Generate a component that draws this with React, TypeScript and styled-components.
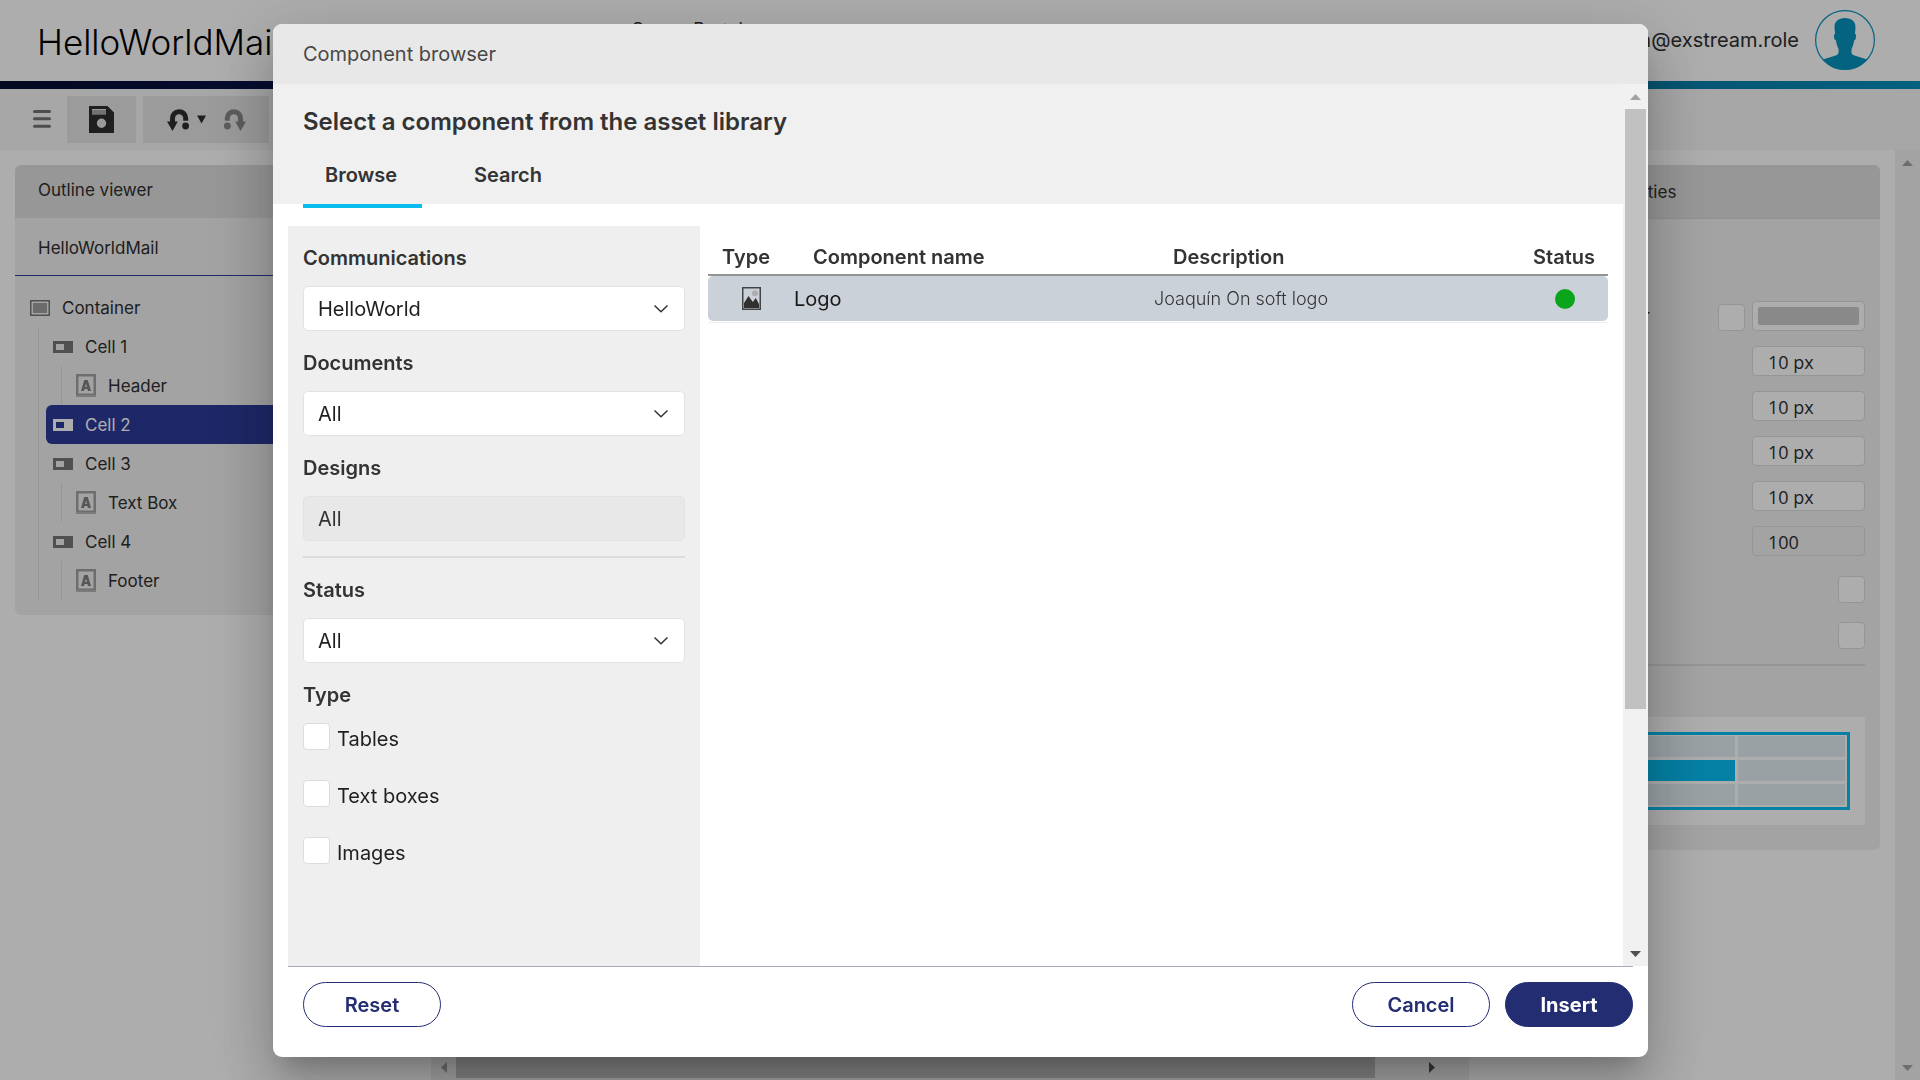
import React from "react";
import styled, { createGlobalStyle, css } from "styled-components";

const GlobalStyle = createGlobalStyle`
  *, *::before, *::after { box-sizing: border-box; }
  html, body, #root { height: 100%; }
  body {
    margin: 0;
    overflow: hidden;
    background: #fff;
    color: #2e2e2e;
    font-family: Inter, "Liberation Sans", sans-serif;
    font-size: 17px;
    line-height: 24px;
  }
  button, input, select { font: inherit; color: inherit; margin: 0; }
  ul { list-style: none; margin: 0; padding: 0; }
  h1, h2, h3 { margin: 0; }
`;

/* ---------- Page behind the dialog ---------- */

const Page = styled.div`
  height: 100vh;
  display: flex;
  flex-direction: column;
`;

const Header = styled.header`
  height: 81px;
  flex: none;
  padding: 0 45px 1px 37px;
  display: flex;
  align-items: center;
  justify-content: space-between;
`;

const AppTitle = styled.h1`
  flex: none;
  width: 595px;
  padding-top: 4px;
  font-size: 35px;
  line-height: 44px;
  font-weight: 300;
  color: #000;
`;

const Tagline = styled.p`
  flex: 1;
  align-self: flex-start;
  margin: 18px 0 0;
  font-size: 18px;
`;

const User = styled.div`
  display: flex;
  align-items: center;
  gap: 16px;
  font-size: 20px;
`;

const BrandStripe = styled.div`
  height: 8px;
  flex: none;
  background: linear-gradient(90deg, #060c30 0%, #0c1650 20%, #0a6b98 75%, #0790bb 100%);
`;

const Toolbar = styled.nav`
  height: 61px;
  flex: none;
  padding: 7px 24px;
  display: flex;
  align-items: flex-start;
  background: #f7f7f7;
`;

const MenuButton = styled.button`
  width: 36px;
  height: 47px;
  margin-right: 7px;
  padding: 0 0 2px;
  border: 0;
  background: none;
  display: grid;
  place-items: center;
`;

const ToolGroup = styled.div<{ $padded?: boolean }>`
  height: 47px;
  margin-right: 7px;
  padding: ${(p) => (p.$padded ? "0 6px 0 15px" : "0")};
  display: flex;
  align-items: center;
  background: #e5e5e5;
`;

const ToolButton = styled.button<{ $width: number }>`
  width: ${(p) => p.$width}px;
  height: 47px;
  padding: 0;
  border: 0;
  background: none;
  display: grid;
  place-items: center;
`;

const Workspace = styled.main`
  flex: 1;
  min-height: 0;
  display: flex;
`;

const SideColumn = styled.section<{ $width: number }>`
  width: ${(p) => p.$width}px;
  flex: none;
  padding: 15px;
`;

const Panel = styled.div`
  border-radius: 6px;
  overflow: hidden;
  background: #f0f0f0;
`;

const PanelHeader = styled.h2<{ $ruled?: boolean }>`
  height: ${(p) => (p.$ruled ? 54 : 53)}px;
  padding: ${(p) => (p.$ruled ? "1px 27px 0" : "0 23px 3px")};
  border-bottom: ${(p) => (p.$ruled ? "1px solid #d6d6d6" : "0")};
  display: flex;
  align-items: center;
  background: #dfdfdf;
  font-size: 17px;
  font-weight: 400;
`;

const DocumentName = styled.div`
  height: 58px;
  padding: 2px 23px 0;
  display: flex;
  align-items: center;
  border-bottom: 1px solid #343c9d;
`;

const Tree = styled.ul`
  padding: 12px 0 15px 8px;
`;

const Branch = styled.ul`
  margin-left: 15px;
  padding-left: 7px;
  border-left: 1px solid #dedede;
`;

const TreeRow = styled.div<{ $selected?: boolean }>`
  height: 39px;
  padding-left: 7px;
  display: flex;
  align-items: center;
  gap: 12px;
  ${(p) =>
    p.$selected &&
    css`
      border-radius: 6px;
      background: #2d3a98;
      color: #fff;
    `}
`;

const Canvas = styled.section`
  flex: 1;
  display: flex;
`;

const CanvasView = styled.div`
  flex: 1;
  display: flex;
  flex-direction: column;
  justify-content: flex-end;
`;

const Track = styled.div<{ $horizontal?: boolean }>`
  ${(p) => (p.$horizontal ? "height: 25px; padding: 2px 0;" : "width: 25px; padding: 0 2px;")}
  flex: none;
  display: flex;
  flex-direction: ${(p) => (p.$horizontal ? "row" : "column")};
  background: #f1f1f1;
`;

const TrackEnd = styled.div<{ $horizontal?: boolean }>`
  ${(p) => (p.$horizontal ? "width: 25px;" : "height: 25px;")}
  flex: none;
  display: grid;
  place-items: center;
`;

const Thumb = styled.div<{ $grow: number }>`
  flex: ${(p) => p.$grow};
  background: #c1c1c1;
`;

const TrackRest = styled.div<{ $grow: number }>`
  flex: ${(p) => p.$grow};
`;

const Properties = styled.div`
  padding: 82px 15px 25px;
`;

const PropertyList = styled.div<{ $ticks?: boolean }>`
  padding: ${(p) => (p.$ticks ? "20px 0 15px" : "0")};
  display: flex;
  flex-direction: column;
  gap: ${(p) => (p.$ticks ? 19 : 15)}px;
`;

const PropertyRow = styled.div`
  padding-left: 9px;
  display: flex;
  align-items: center;
  justify-content: space-between;
`;

const PropertySection = styled.h3`
  height: 51px;
  padding-left: 9px;
  display: flex;
  align-items: center;
  font-size: 17px;
  font-weight: 600;
`;

const Controls = styled.div`
  display: flex;
  align-items: flex-end;
  gap: 7px;
`;

const ValueInput = styled.input`
  width: 113px;
  height: 30px;
  padding: 2px 15px 0;
  border: 1px solid #dcdcdc;
  border-radius: 4px;
  background: #fff;
  font-family: "Open Sans", "Noto Sans", sans-serif;
  font-size: 18px;
  &:disabled { background: #f0f0f0; }
`;

const ColorButton = styled.button`
  width: 113px;
  height: 30px;
  padding: 5px;
  border: 1px solid #dcdcdc;
  border-radius: 4px;
  background: #fff;
  display: flex;
  &::before {
    content: "";
    flex: 1;
    height: 18px;
    border-radius: 2px;
    background: #cacaca;
  }
`;

const Tick = styled.input.attrs({ type: "checkbox" })`
  appearance: none;
  width: 27px;
  height: 27px;
  border: 1px solid #dcdcdc;
  border-radius: 4px;
  background: #fff;
`;

const Rule = styled.hr`
  width: 100%;
  height: 2px;
  margin: 0;
  border: 0;
  background: #dcdcdc;
`;

const GridPreview = styled.div`
  height: 108px;
  padding: 15px;
  display: grid;
  background: #fff;
`;

const GridFrame = styled.div`
  padding: 1px 2px 2px;
  border: 3px solid #07bef3;
  display: grid;
  grid-template-columns: repeat(3, 1fr);
  gap: 3px;
`;

const GridCell = styled.div<{ $active: boolean }>`
  background: ${(p) => (p.$active ? "#07bef3" : "#e3eef4")};
`;

/* ---------- Dialog ---------- */

const Backdrop = styled.div`
  position: fixed;
  inset: 0;
  padding: 24px 272px 23px 273px;
  display: flex;
  background: rgba(0, 0, 0, 0.32);
`;

const Dialog = styled.div`
  flex: 1;
  min-width: 0;
  display: flex;
  flex-direction: column;
  overflow: hidden;
  border-radius: 9px;
  background: #fff;
  color: #333;
  font-size: 20px;
  box-shadow:
    0 17px 23px -11px rgba(0, 0, 0, 0.2),
    0 36px 57px 5px rgba(0, 0, 0, 0.14),
    0 14px 69px 12px rgba(0, 0, 0, 0.12);
`;

const DialogTitle = styled.div`
  height: 60px;
  flex: none;
  padding: 0 30px;
  display: flex;
  align-items: center;
  background: #e8e8e8;
  color: #484848;
`;

const DialogBody = styled.div`
  flex: 1;
  min-height: 0;
  display: flex;
`;

const DialogContent = styled.div`
  flex: 1;
  display: flex;
  flex-direction: column;
`;

const Intro = styled.div`
  height: 120px;
  flex: none;
  padding: 0 30px;
  background: #f0f0f0;
`;

const Heading = styled.h2`
  height: 52px;
  padding-top: 23px;
  font-size: 24px;
  line-height: 30px;
  font-weight: 600;
`;

const Tabs = styled.div`
  height: 72px;
  display: flex;
  gap: 30px;
`;

const Tab = styled.button<{ $active?: boolean }>`
  min-width: 119px;
  height: 72px;
  padding: 10px 22px 0;
  border: 0;
  border-bottom: 4px solid ${(p) => (p.$active ? "#09bcef" : "transparent")};
  background: none;
  font-weight: 600;
  text-align: left;
`;

const Columns = styled.div`
  flex: 1;
  padding: 22px 15px 0;
  display: flex;
  gap: 8px;
`;

const Filters = styled.form`
  width: 412px;
  flex: none;
  padding: 15px;
  display: flex;
  flex-direction: column;
  gap: 15px;
  background: #efefef;
`;

const Field = styled.div`
  display: flex;
  flex-direction: column;
  gap: 15px;
`;

const fieldLabel = css`
  height: 30px;
  padding: 2px 0 0;
  line-height: 30px;
  font-weight: 600;
`;

const Label = styled.label`
  ${fieldLabel}
`;

const SelectBox = styled.div`
  display: grid;
  align-items: center;
  svg {
    grid-area: 1 / 1;
    justify-self: end;
    margin-right: 16px;
    pointer-events: none;
  }
`;

const Select = styled.select`
  grid-area: 1 / 1;
  appearance: none;
  width: 100%;
  height: 45px;
  padding: 0 14px;
  border: 1px solid #e2e2e2;
  border-radius: 5px;
  background: #fff;
  color: #1f1f1f;
  &:disabled {
    background: #e8e8e8;
    color: #333;
    opacity: 1;
  }
`;

const TypeGroup = styled.fieldset`
  margin: 0;
  padding: 0;
  border: 0;
  min-width: 0;
`;

const Legend = styled.legend`
  ${fieldLabel}
  margin-bottom: 15px;
`;

const Options = styled.div`
  display: flex;
  flex-direction: column;
  gap: 30px;
`;

const Option = styled.label`
  height: 27px;
  display: flex;
  align-items: center;
  gap: 7px;
  color: #1f1f1f;
  span { padding-top: 4px; }
`;

const Results = styled.div`
  flex: 1;
  min-width: 0;
`;

const Table = styled.table`
  width: 100%;
  table-layout: fixed;
  border-collapse: separate;
  border-spacing: 0;
  padding-bottom: 1px;
  border-bottom: 1px solid #eee;
`;

const Th = styled.th<{ $width?: string; $left?: number }>`
  width: ${(p) => p.$width ?? "auto"};
  height: 50px;
  padding: 14px 0 0 ${(p) => p.$left ?? 24}px;
  border-bottom: 2px solid #949494;
  text-align: left;
  font-weight: 600;
  white-space: nowrap;
`;

const Td = styled.td<{ $left?: number; $small?: boolean }>`
  height: 45px;
  padding: 0 0 0 ${(p) => p.$left ?? 5}px;
  background: #cbd1d8;
  color: ${(p) => (p.$small ? "#333" : "#1a1a1a")};
  font-size: ${(p) => (p.$small ? 18 : 20)}px;
  font-weight: ${(p) => (p.$small ? 300 : 400)};
  &:first-child { border-radius: 5px 0 0 5px; }
  &:last-child { border-radius: 0 5px 5px 0; }
  svg { display: block; }
`;

const StatusDot = styled.div`
  width: 20px;
  height: 20px;
  border-radius: 50%;
  background: #0aa51b;
`;

const DialogFooter = styled.footer`
  height: 91px;
  flex: none;
  margin: 0 15px;
  padding: 15px 0 30px 15px;
  display: flex;
  gap: 15px;
  border-top: 1px solid #a9abbb;
`;

const Spacer = styled.div`
  flex: 1;
`;

const PillButton = styled.button<{ $primary?: boolean }>`
  width: ${(p) => (p.$primary ? 128 : 138)}px;
  height: 45px;
  padding: 0;
  border: 1px solid #222d72;
  border-radius: 23px;
  background: ${(p) => (p.$primary ? "#222d72" : "#fff")};
  color: ${(p) => (p.$primary ? "#fff" : "#222d72")};
  font-weight: ${(p) => (p.$primary ? 700 : 600)};
`;

/* ---------- Icons ---------- */

const Avatar = () => (
  <svg width="60" height="60" viewBox="0 0 60 60" fill="#0593bd" aria-hidden="true">
    <circle cx="30" cy="30" r="29.4" fill="none" stroke="#0593bd" strokeWidth="1.2" />
    <path d="M30 8c6.500 0 10.700 3.500 10.500 9.500L40 24c1.600.2 1.300 2.600.6 5-.4 1.200-1 1.300-1.500 1.500-.4 3.500-1.500 6.500-2.500 8.500-.5 3.500 0 5.500 2.200 6.300 4 1.600 8 2.300 13.500 4.200C46 56.500 38.500 60 30 60S13.500 56.500 8 49.500c5.500-1.900 9.500-2.600 13.300-4.200 2.200-.8 2.700-2.800 2.200-6.300-1-2-2.100-5-2.500-8.500-.5-.2-1.100-.3-1.500-1.500-.7-2.400-1-4.800.6-5l-.6-6.500C19.300 11.500 23.500 8 30 8z" />
  </svg>
);

const MenuIcon = () => (
  <svg width="18" height="18" viewBox="0 0 18 18" stroke="#737373" strokeWidth="3" strokeLinecap="round" aria-hidden="true">
    <path d="M1.500 1.500h15M1.500 8.800h15M1.500 16.300h15" />
  </svg>
);

const SaveIcon = () => (
  <svg width="25" height="27" viewBox="0 0 25 27" aria-hidden="true">
    <path fillRule="evenodd" fill="#2e2e2e" d="M0 0h18.500L25 6.500V27H0zM3 3v5.500h14V3zM12.500 12.500a4.700 4.700 0 1 0 0 9.400 4.700 4.700 0 0 0 0-9.400z" />
    <path fill="#a8a8a8" d="M3 4h14v4H3z" />
  </svg>
);

const UndoIcon = ({ color, flip }: { color: string; flip?: boolean }) => (
  <svg width="22" height="22" viewBox="0 0 22 22" aria-hidden="true">
    <g transform={flip ? "matrix(-1 0 0 1 22 0)" : undefined}>
      <path d="M5.500 13V9.500a6.600 6.600 0 0 1 13.200-.5v2.800" fill="none" stroke={color} strokeWidth="5" />
      <path d="M0 12.500h10.800L5.500 22z" fill={color} />
      <circle cx="18.600" cy="17" r="3.400" fill={color} />
    </g>
  </svg>
);

const arrowPaths = {
  up: "M5.500 0L11 6H0z",
  down: "M0 0h11L5.500 6z",
  left: "M6 0v11L0 5.500z",
  right: "M0 0l6 5.500L0 11z",
};

const Arrow = ({ dir, color }: { dir: keyof typeof arrowPaths; color: string }) => {
  const upright = dir === "up" || dir === "down";
  return (
    <svg width={upright ? 11 : 6} height={upright ? 6 : 11} aria-hidden="true">
      <path d={arrowPaths[dir]} fill={color} />
    </svg>
  );
};

const CaretIcon = () => (
  <svg width="9" height="9" viewBox="0 0 9 9" aria-hidden="true">
    <path d="M0 0.500h9L4.500 8.500z" fill="#2e2e2e" />
  </svg>
);

const ContainerIcon = () => (
  <svg width="20" height="16" viewBox="0 0 20 16" aria-hidden="true">
    <rect x="0.750" y="0.750" width="18.500" height="14.500" fill="none" stroke="#777" strokeWidth="1.500" />
    <rect x="3" y="3" width="14" height="10" fill="#a0a0a0" />
  </svg>
);

const CellIcon = () => (
  <svg width="20" height="12" viewBox="0 0 20 12" aria-hidden="true">
    <path fillRule="evenodd" fill="currentColor" d="M0 0h20v12H0zM3 3v6h8V3z" />
  </svg>
);

const TextIcon = () => (
  <svg width="20" height="23" viewBox="0 0 20 23" aria-hidden="true">
    <rect x="1.250" y="1.250" width="17.500" height="19.500" fill="none" stroke="#a3a3a3" strokeWidth="2.500" />
    <path d="M0 22h20" stroke="#b5b5b5" strokeWidth="2" />
    <path fillRule="evenodd" fill="#808080" d="M8.200 6h3.600L15 17h-3l-.6-2H8.600L8 17H5zM10 9.200L9.100 13h1.800z" />
  </svg>
);

const ChevronIcon = () => (
  <svg width="16" height="10" viewBox="0 0 16 10" fill="none" stroke="#333" strokeWidth="1.500" aria-hidden="true">
    <path d="M1.500 1.500L8 7.800l6.500-6.300" />
  </svg>
);

const ImageIcon = () => (
  <svg width="19" height="23" viewBox="0 0 19 23" role="img" aria-label="Image">
    <rect x="0.750" y="0.750" width="17.500" height="21.500" fill="none" stroke="#444" strokeWidth="1.500" />
    <circle cx="13" cy="6.200" r="3" fill="#adadad" />
    <path d="M2 21v-5l4.500-7 4.300 6 3-4 3.200 6v4z" fill="#303030" />
  </svg>
);

/* ---------- Parts ---------- */

const CellMark = styled.span<{ $selected?: boolean }>`
  display: flex;
  color: ${(p) => (p.$selected ? "#fff" : "#777")};
`;

type CellNode = { name: string; child?: string; selected?: boolean };

const cells: CellNode[] = [
  { name: "Cell 1", child: "Header" },
  { name: "Cell 2", selected: true },
  { name: "Cell 3", child: "Text Box" },
  { name: "Cell 4", child: "Footer" },
];

const Outline = () => (
  <Panel>
    <PanelHeader>Outline viewer</PanelHeader>
    <DocumentName>HelloWorldMail</DocumentName>
    <Tree>
      <li>
        <TreeRow>
          <ContainerIcon />
          Container
        </TreeRow>
        <Branch>
          {cells.map((cell) => (
            <li key={cell.name}>
              <TreeRow $selected={cell.selected}>
                <CellMark $selected={cell.selected}>
                  <CellIcon />
                </CellMark>
                {cell.name}
              </TreeRow>
              {cell.child && (
                <Branch>
                  <li>
                    <TreeRow>
                      <TextIcon />
                      {cell.child}
                    </TreeRow>
                  </li>
                </Branch>
              )}
            </li>
          ))}
        </Branch>
      </li>
    </Tree>
  </Panel>
);

const paddings = ["Top padding", "Right padding", "Bottom padding", "Left padding"];

const CellProperties = () => (
  <Panel>
    <PanelHeader $ruled>Container properties</PanelHeader>
    <Properties>
      <PropertyList>
        <PropertyRow>
          <label htmlFor="bg-on">Background color</label>
          <Controls>
            <Tick id="bg-on" />
            <ColorButton aria-label="Pick background color" />
          </Controls>
        </PropertyRow>
        {paddings.map((name) => (
          <PropertyRow key={name}>
            <label htmlFor={name}>{name}</label>
            <ValueInput id={name} defaultValue="10 px" />
          </PropertyRow>
        ))}
        <PropertyRow>
          <label htmlFor="cell-width">Width</label>
          <ValueInput id="cell-width" defaultValue="100" disabled />
        </PropertyRow>
      </PropertyList>
      <PropertyList $ticks>
        <PropertyRow>
          <label htmlFor="hide">Hide</label>
          <Tick id="hide" />
        </PropertyRow>
        <PropertyRow>
          <label htmlFor="lock">Lock</label>
          <Tick id="lock" />
        </PropertyRow>
      </PropertyList>
      <Rule />
      <PropertySection>Alignment</PropertySection>
      <GridPreview>
        <GridFrame>
          {Array.from({ length: 9 }, (_, i) => (
            <GridCell key={i} $active={i === 4} />
          ))}
        </GridFrame>
      </GridPreview>
    </Properties>
  </Panel>
);

const FilterSelect = ({ id, label, value, disabled }: { id: string; label: string; value: string; disabled?: boolean }) => (
  <Field>
    <Label htmlFor={id}>{label}</Label>
    <SelectBox>
      <Select id={id} defaultValue={value} disabled={disabled}>
        <option>{value}</option>
      </Select>
      {!disabled && <ChevronIcon />}
    </SelectBox>
  </Field>
);

const ComponentBrowser = () => (
  <Dialog role="dialog" aria-modal="true" aria-label="Component browser">
    <DialogTitle>Component browser</DialogTitle>
    <DialogBody>
      <DialogContent>
        <Intro>
          <Heading>Select a component from the asset library</Heading>
          <Tabs role="tablist">
            <Tab role="tab" aria-selected="true" $active>Browse</Tab>
            <Tab role="tab" aria-selected="false">Search</Tab>
          </Tabs>
        </Intro>
        <Columns>
          <Filters>
            <FilterSelect id="communications" label="Communications" value="HelloWorld" />
            <FilterSelect id="documents" label="Documents" value="All" />
            <FilterSelect id="designs" label="Designs" value="All" disabled />
            <Rule />
            <FilterSelect id="status" label="Status" value="All" />
            <TypeGroup>
              <Legend>Type</Legend>
              <Options>
                {["Tables", "Text boxes", "Images"].map((name) => (
                  <Option key={name}>
                    <Tick />
                    <span>{name}</span>
                  </Option>
                ))}
              </Options>
            </TypeGroup>
          </Filters>
          <Results>
            <Table>
              <thead>
                <tr>
                  <Th $width="81px" $left={14}>Type</Th>
                  <Th $width="40%">Component name</Th>
                  <Th $width="40%">Description</Th>
                  <Th>Status</Th>
                </tr>
              </thead>
              <tbody>
                <tr>
                  <Td $left={34}><ImageIcon /></Td>
                  <Td>Logo</Td>
                  <Td $small>Joaquín On soft logo</Td>
                  <Td $left={46}><StatusDot role="img" aria-label="Approved" /></Td>
                </tr>
              </tbody>
            </Table>
          </Results>
        </Columns>
      </DialogContent>
      <Track>
        <TrackEnd><Arrow dir="up" color="#a3a3a3" /></TrackEnd>
        <Thumb $grow={600} />
        <TrackRest $grow={232} />
        <TrackEnd><Arrow dir="down" color="#505050" /></TrackEnd>
      </Track>
    </DialogBody>
    <DialogFooter>
      <PillButton type="button">Reset</PillButton>
      <Spacer />
      <PillButton type="button">Cancel</PillButton>
      <PillButton type="button" $primary>Insert</PillButton>
    </DialogFooter>
  </Dialog>
);

export default function App() {
  return (
    <>
      <GlobalStyle />
      <Page>
        <Header>
          <AppTitle>HelloWorldMail</AppTitle>
          <Tagline>Server Portal</Tagline>
          <User>
            admin@exstream.role
            <Avatar />
          </User>
        </Header>
        <BrandStripe />
        <Toolbar>
          <MenuButton aria-label="Menu"><MenuIcon /></MenuButton>
          <ToolGroup>
            <ToolButton $width={69} aria-label="Save"><SaveIcon /></ToolButton>
          </ToolGroup>
          <ToolGroup $padded>
            <ToolButton $width={39} aria-label="Undo"><UndoIcon color="#2e2e2e" /></ToolButton>
            <CaretIcon />
            <ToolButton $width={57} aria-label="Redo"><UndoIcon color="#888" flip /></ToolButton>
          </ToolGroup>
        </Toolbar>
        <Workspace>
          <SideColumn $width={431}>
            <Outline />
          </SideColumn>
          <Canvas>
            <CanvasView>
              <Track $horizontal>
                <TrackEnd $horizontal><Arrow dir="left" color="#a3a3a3" /></TrackEnd>
                <Thumb $grow={919} />
                <TrackRest $grow={44} />
                <TrackEnd $horizontal><Arrow dir="right" color="#505050" /></TrackEnd>
              </Track>
            </CanvasView>
            <Track />
          </Canvas>
          <SideColumn $width={426}>
            <CellProperties />
          </SideColumn>
          <Track>
            <TrackEnd><Arrow dir="up" color="#a3a3a3" /></TrackEnd>
            <TrackRest $grow={1} />
            <TrackEnd><Arrow dir="down" color="#a3a3a3" /></TrackEnd>
          </Track>
        </Workspace>
      </Page>
      <Backdrop>
        <ComponentBrowser />
      </Backdrop>
    </>
  );
}
